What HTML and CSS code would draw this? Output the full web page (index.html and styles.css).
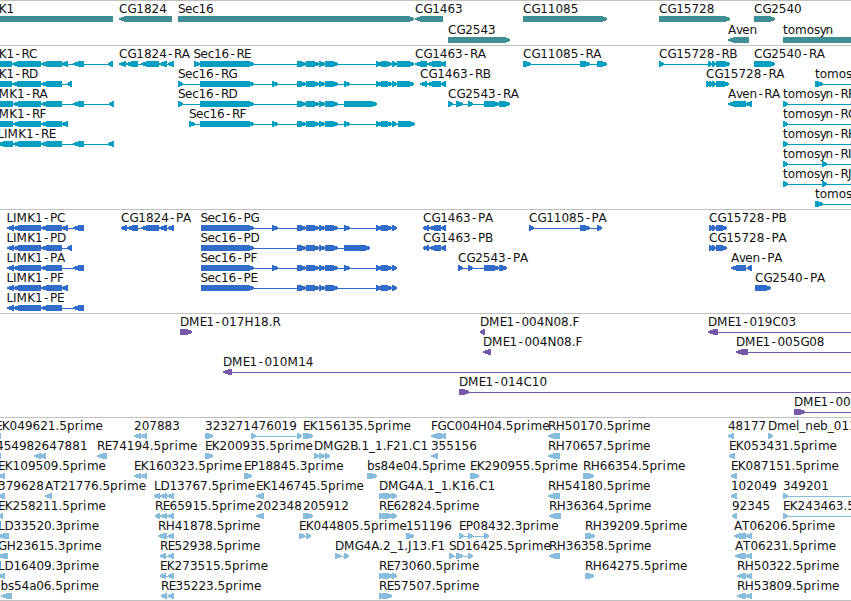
FILE: index.html
```html
<!DOCTYPE html>
<html lang="en">
<head>
  <meta charset="UTF-8">
  <meta name="viewport" content="width=device-width, initial-scale=1.0">
  <title>Genome browser</title>
  <link rel="stylesheet" href="styles.css">
</head>
<body>
  <main class="browser">
    <svg class="track track-genes" data-track="genes" data-pitch="21"></svg>
    <svg class="track track-transcripts" data-track="transcripts" data-pitch="20"></svg>
    <svg class="track track-proteins" data-track="proteins" data-pitch="20"></svg>
    <svg class="track track-clones" data-track="clones" data-pitch="20"></svg>
    <svg class="track track-ests" data-track="ests" data-pitch="20"></svg>
  </main>
  <script src="tracks.js"></script>
</body>
</html>
```

FILE: styles.css
```css
html, body {
  margin: 0;
  padding: 0;
  overflow: hidden;
  background: #fff;
}

.browser {
  display: flex;
  flex-direction: column;
  width: 851px;
  border-bottom: 1px solid #c0c0c0;
}

.track {
  display: block;
  box-sizing: border-box;
  width: 851px;
  border-top: 1px solid #c0c0c0;
  overflow: hidden;
}

.label {
  font-family: 'DejaVu Sans', sans-serif;
  font-size: 12px;
  fill: #111;
}

.exon,
.intron {
  shape-rendering: crispEdges;
}

/* track heights and colours */
.track-genes {
  height: 45px;
  fill: #3f8e94;
}

.track-transcripts {
  height: 164px;
  fill: #009ec0;
}

.track-proteins {
  height: 104px;
  fill: #316ccb;
}

.track-clones {
  height: 104px;
  fill: #7658a8;
}

.track-ests {
  height: 183px;
  fill: #88bcdd;
}
```

FILE: tracks.js
```javascript
const SVG_NS = 'http://www.w3.org/2000/svg';
const WIDTH = 851;
const OFF = 870; // past the right edge

// label letter advances
const ADVANCE = {
  A: 8, B: 7.4, C: 8.4, D: 9, E: 6.8, F: 6.6, G: 8.8, H: 9, I: 3.6, J: 3.8, K: 7.8,
  L: 6.4, M: 10.8, N: 9, P: 7, R: 7.7, S: 7, T: 7.4,
  a: 7, b: 7.6, c: 6.2, e: 7.2, i: 3.8, l: 3.4, m: 11.7, n: 7.6, o: 7.3, p: 7.8,
  r: 5.4, s: 5.8, t: 4.7, v: 6.3, y: 5.8, '.': 3.8, '-': 7.2, _: 6
};

// exon groups shared by several isoforms
const SEC_MID = [[297, 306], [306, 319], [319, 325], [325, 338]];
const SEC_END = [[376, 382], [381, 392], [392, 397]];
const LIMK = [[7, 14], [13, 41], [41, 62]];
const K16 = [[379, 383], [382, 393], [392, 397]];

// [row, strand, label, exons, label x, line end]
const TRACKS = {
  genes: [
    [0, '-', 'LIMK1', [[-20, 113]], -22],
    [0, '-', 'CG1824', [[119, 172]]],
    [0, '+', 'Sec16', [[178, 414]]],
    [0, '-', 'CG1463', [[415, 443]]],
    [1, '+', 'CG2543', [[448, 510]]],
    [0, '+', 'CG11085', [[523, 607]]],
    [0, '+', 'CG15728', [[659, 730]]],
    [1, '-', 'Aven', [[728, 749]]],
    [0, '+', 'CG2540', [[754, 775]]],
    [1, '+', 'tomosyn', [[783, OFF]]]
  ],
  transcripts: [
    [0, '-', 'LIMK1-RC', [[-20, 12], [12, 41], [41, 62], [62, 68], [73, 84], [108, 113]], -22],
    [1, '-', 'LIMK1-RD', [[-20, 12], [12, 41], [41, 62], [67, 72]], -22],
    [2, '-', 'LIMK1-RA', [[-10, 13], [13, 41], [41, 62], [73, 84], [109, 114]], -11.5],
    [3, '-', 'LIMK1-RF', [[-10, 13], [13, 41], [41, 62], [62, 68]], -11.5],
    [4, '-', 'LIMK1-RE', [[-2, 13], [13, 41], [41, 62], [73, 84], [108, 114]], -2.5],
    [0, '-', 'CG1824-RA', [[119, 126], [126, 138], [141, 159], [159, 167], [168, 174]]],
    [0, '+', 'Sec16-RE', [[194, 200], [200, 254], ...SEC_MID, ...SEC_END, [397, 414]], 193.5],
    [1, '+', 'Sec16-RG', [[178, 183], [200, 254], [272, 278], ...SEC_MID, [344, 350], ...SEC_END, [397, 414]]],
    [2, '+', 'Sec16-RD', [[178, 183], [200, 254], ...SEC_MID, [344, 377]]],
    [3, '+', 'Sec16-RF', [[189, 195], [200, 254], [272, 278], ...SEC_MID, [344, 350], ...SEC_END, [398, 415]]],
    [0, '-', 'CG1463-RA', [[415, 427], [427, 441], [440, 446]]],
    [1, '-', 'CG1463-RB', [[420, 427], [427, 441], [441, 446]]],
    [2, '+', 'CG2543-RA', [[448, 453], [456, 463], [468, 473], [484, 499], [499, 510]]],
    [0, '+', 'CG11085-RA', [[523, 531], [580, 590], [597, 607]]],
    [0, '+', 'CG15728-RB', [[659, 664], [708, 712], [712, 716], [716, 730]]],
    [1, '+', 'CG15728-RA', [[706, 709], [709, 712], [712, 716], [716, 729]]],
    [2, '-', 'Aven-RA', [[728, 746], [746, 752]]],
    [0, '+', 'CG2540-RA', [[754, 775]]],
    [1, '+', 'tomosyn-RE', [[815, 823]], 815, OFF],
    [2, '+', 'tomosyn-RF', [[783, 788]], 783, OFF],
    [3, '+', 'tomosyn-RG', [[783, 788]], 783, OFF],
    [4, '+', 'tomosyn-RH', [[783, 788]], 783, OFF],
    [5, '+', 'tomosyn-RI', [[783, 788], [822, 827]], 783, OFF],
    [6, '+', 'tomosyn-RJ', [[783, 788], [822, 827]], 783, OFF],
    [7, '+', 'tomosyn-RK', [[815, 823]], 815, OFF]
  ],
  proteins: [
    [0, '-', 'LIMK1-PC', [...LIMK, [62, 68], [73, 84]], 6.5],
    [1, '-', 'LIMK1-PD', [...LIMK, [67, 72]], 6.5],
    [2, '-', 'LIMK1-PA', [...LIMK, [73, 84]], 6.5],
    [3, '-', 'LIMK1-PF', [...LIMK, [62, 68]], 6.5],
    [4, '-', 'LIMK1-PE', [...LIMK, [73, 84]], 6.5],
    [0, '-', 'CG1824-PA', [[121, 127], [127, 138], [141, 159], [159, 167], [168, 174]]],
    [0, '+', 'Sec16-PG', [[201, 254], [272, 278], ...SEC_MID, [344, 350], ...SEC_END], 200.5],
    [1, '+', 'Sec16-PD', [[201, 254], ...SEC_MID, [344, 370]], 200.5],
    [2, '+', 'Sec16-PF', [[201, 254], [272, 278], ...SEC_MID, [344, 350], ...SEC_END], 200.5],
    [3, '+', 'Sec16-PE', [[201, 254], ...SEC_MID, ...SEC_END], 200.5],
    [0, '-', 'CG1463-PA', [[423, 429], [429, 441], [441, 446]]],
    [1, '-', 'CG1463-PB', [[423, 429], [429, 441], [441, 446]]],
    [2, '+', 'CG2543-PA', [[458, 463], [468, 473], [484, 499], [499, 507]]],
    [0, '+', 'CG11085-PA', [[529, 534], [580, 590], [597, 602]]],
    [0, '+', 'CG15728-PB', [[709, 712], [712, 716], [716, 727]]],
    [1, '+', 'CG15728-PA', [[709, 712], [712, 716], [716, 727]]],
    [2, '-', 'Aven-PA', [[731, 746], [747, 752]]],
    [3, '+', 'CG2540-PA', [[755, 771]]]
  ],
  clones: [
    [0, '+', 'DME1-017H18.R', [[180, 192]]],
    [0, '-', 'DME1-004N08.F', [[480, 485]]],
    [1, '-', 'DME1-004N08.F', [[483, 491]]],
    [2, '-', 'DME1-010M14', [[223, 232]], 223, OFF],
    [3, '+', 'DME1-014C10', [[459, 469]], 459, OFF],
    [0, '-', 'DME1-019C03', [[708, 718]], 708, OFF],
    [1, '-', 'DME1-005G08', [[736, 748]], 736, OFF],
    [4, '+', 'DME1-008A02', [[794, 805]], 794, OFF]
  ],
  ests: [
    [0, '-', 'EK049621.5prime', [[-4, 1]], -5],
    [0, '-', '207883', [[134, 141], [140, 147]]],
    [0, '+', '323271', [[205, 213]]],
    [0, '+', '476019', [[251, 256], [297, 302]]],
    [0, '+', 'EK156135.5prime', [[303, 306], [305, 313]]],
    [0, '-', 'FGC004H04.5prime', [[431, 442], [441, 446]]],
    [0, '-', 'RH50170.5prime', [[548, 560]]],
    [0, '-', '48177', [[728, 734]]],
    [0, '+', 'Dmel_neb_0113', [[768, 773]]],

    [1, '-', '45498', [[-5, 1]], -4],
    [1, '-', '2647881', [[34, 41], [40, 46]]],
    [1, '-', 'RE74194.5prime', [[97, 107]]],
    [1, '+', 'EK200935.5prime', [[205, 213]]],
    [1, '+', 'DMG2B.1_1.F21.C1', [[314, 319], [319, 325], [325, 330]]],
    [1, '-', '355156', [[431, 438]]],
    [1, '-', 'RH70657.5prime', [[548, 560]]],
    [1, '-', 'EK053431.5prime', [[729, 735]]],

    [2, '-', 'EK109509.5prime', [[-2, 5]]],
    [2, '-', 'EK160323.5prime', [[134, 141], [140, 147]]],
    [2, '+', 'EP18845.3prime', [[244, 252]]],
    [2, '+', 'bs84e04.5prime', [[367, 377]]],
    [2, '+', 'EK290955.5prime', [[470, 479]]],
    [2, '+', 'RH66354.5prime', [[583, 594]]],
    [2, '-', 'EK087151.5prime', [[731, 737]]],

    [3, '-', '379628', [[-3, 5]], -2],
    [3, '-', 'AT21776.5prime', [[45, 52]]],
    [3, '-', 'LD13767.5prime', [[154, 160], [160, 167], [167, 174]]],
    [3, '-', 'EK146745.5prime', [[256, 264]]],
    [3, '+', 'DMG4A.1_1.K16.C1', K16],
    [3, '-', 'RH54180.5prime', [[548, 560]]],
    [3, '-', '102049', [[731, 737]]],
    [3, '+', '349201', [[783, 788]], 783, OFF],

    [4, '-', 'EK258211.5prime', [[-2, 3]]],
    [4, '-', 'RE65915.5prime', [[155, 160], [160, 167], [167, 174]]],
    [4, '-', '202348', [[256, 264]]],
    [4, '+', '205912', [[303, 306], [305, 313]]],
    [4, '+', 'RE62824.5prime', K16],
    [4, '-', 'RH36364.5prime', [[549, 561]]],
    [4, '-', '92345', [[732, 737]]],
    [4, '+', 'EK243463.5prime', [[783, 788]], 783, OFF],

    [5, '-', 'LD33520.3prime', [[-2, 9]]],
    [5, '-', 'RH41878.5prime', [[158, 167], [168, 174]]],
    [5, '+', 'EK044805.5prime', [[299, 305], [306, 311]]],
    [5, '+', '151196', [[406, 414]]],
    [5, '+', 'EP08432.3prime', [[459, 464], [468, 473], [484, 489]]],
    [5, '+', 'RH39209.5prime', [[585, 595]]],
    [5, '-', 'AT06206.5prime', [[734, 746], [746, 752]]],

    [6, '-', 'GH23615.3prime', [[-2, 8]]],
    [6, '-', 'RE52938.5prime', [[160, 166], [168, 174]]],
    [6, '+', 'DMG4A.2_1.J13.F1', [[335, 341], [344, 349]]],
    [6, '+', 'SD16425.5prime', [[449, 454], [456, 463], [468, 473]]],
    [6, '-', 'RH36358.5prime', [[549, 560]]],
    [6, '-', 'AT06231.5prime', [[735, 746], [746, 752]]],

    [7, '-', 'LD16409.3prime', [[-2, 5]]],
    [7, '-', 'EK273515.5prime', [[160, 166], [168, 174]]],
    [7, '+', 'RE73060.5prime', K16],
    [7, '+', 'RH64275.5prime', [[585, 594]]],
    [7, '-', 'RH50322.5prime', [[737, 746], [746, 752]]],

    [8, '-', 'bs54a06.5prime', [[1, 12]], 0.5],
    [8, '-', 'RE35223.5prime', [[161, 167], [168, 174]]],
    [8, '+', 'RE57507.5prime', [[379, 383], [382, 392]]],
    [8, '-', 'RH53809.5prime', [[737, 746], [746, 752]]]
  ]
};

function add(parent, tag, attrs) {
  const el = document.createElementNS(SVG_NS, tag);
  for (const name in attrs) {
    el.setAttribute(name, attrs[name]);
  }
  parent.appendChild(el);
  return el;
}

// letters scrolled out of the view are left out
function drawLabel(svg, text, x, y) {
  const xs = [];
  let visible = '';
  for (const ch of text) {
    const advance = ADVANCE[ch] || 7.65;
    if (x + advance > 1 && x < WIDTH - 1) {
      xs.push((ch === '-' ? x + 1.3 : x).toFixed(1));
      visible += ch;
    }
    x += advance;
  }
  add(svg, 'text', { class: 'label', x: xs.join(' '), y: y }).textContent = visible;
}

function drawExon(svg, start, end, strand, y) {
  const tip = Math.min(6, end - start - 1);
  const side = strand === '+' ? 1 : -1;
  const back = side === 1 ? start : end;
  const front = side === 1 ? end : start;
  const points = [
    [back, y],
    [front - side * tip, y],
    [front - side * tip / 2, y + 1],
    [front, y + 2],
    [front, y + 4],
    [front - side * tip / 2, y + 5],
    [front - side * tip, y + 6],
    [back, y + 6]
  ];
  add(svg, 'polygon', { class: 'exon', points: points.join(' ') });
}

document.querySelectorAll('.track').forEach(svg => {
  const pitch = Number(svg.dataset.pitch);
  TRACKS[svg.dataset.track].forEach(([row, strand, text, exons, labelX, lineEnd]) => {
    const top = row * pitch;
    const start = exons[0][0];
    const end = lineEnd || exons[exons.length - 1][1];
    if (exons.length > 1 || lineEnd) {
      add(svg, 'rect', { class: 'intron', x: start, y: top + 18, width: end - start, height: 1 });
    }
    exons.forEach(exon => drawExon(svg, exon[0], exon[1], strand, top + 15));
    drawLabel(svg, text, labelX === undefined ? start : labelX, top + 12);
  });
});
```
